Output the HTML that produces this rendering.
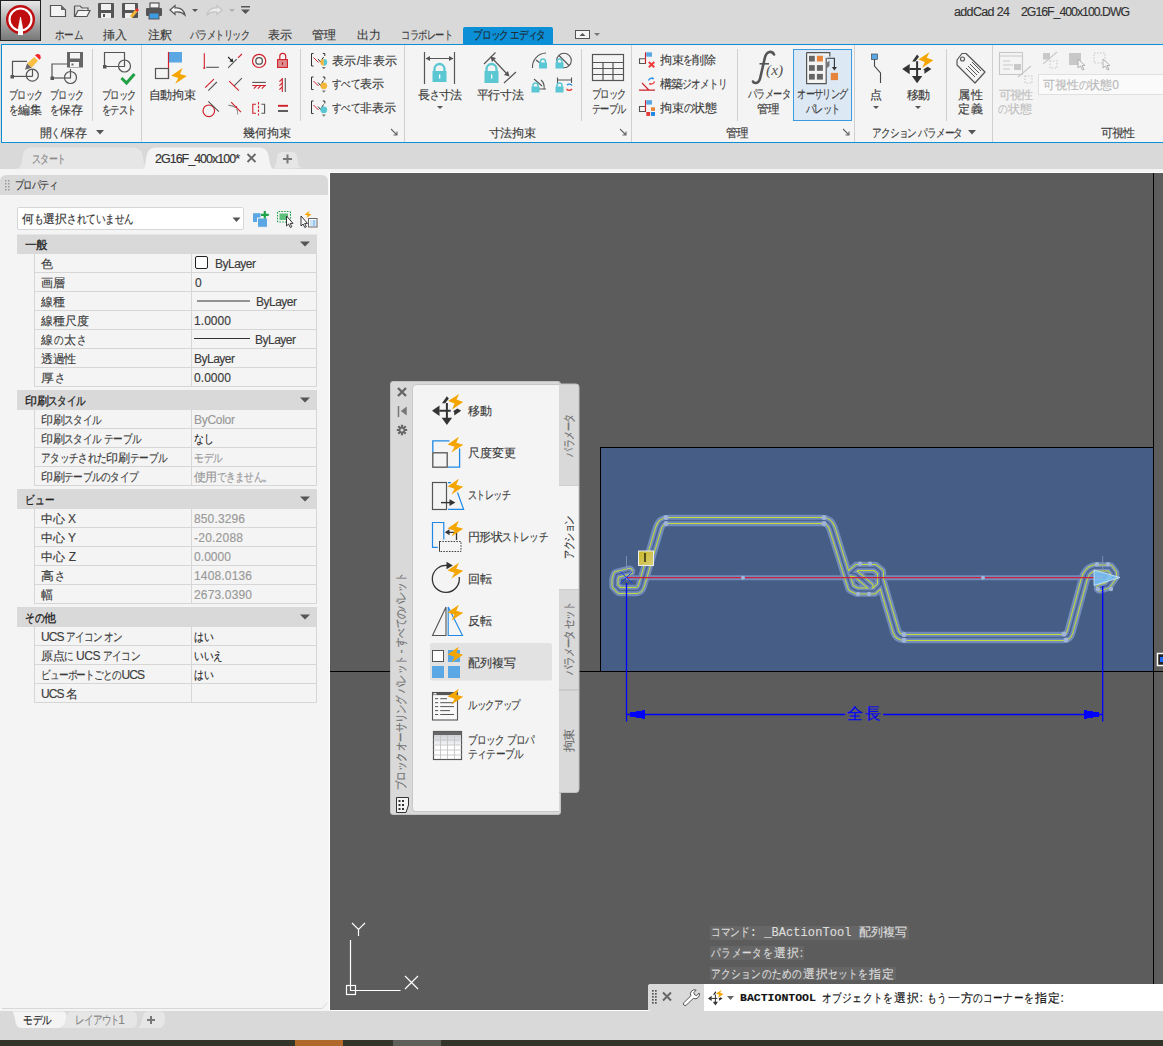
<!DOCTYPE html><html><head><meta charset="utf-8">
<style>
*{box-sizing:border-box;margin:0;padding:0}
html,body{width:1163px;height:1046px;overflow:hidden;background:#d9d9d9;font-family:"Liberation Sans",sans-serif;font-size:12px;color:#3c3c3c}
.a{position:absolute}
.t{position:absolute;white-space:nowrap;line-height:14px;height:14px;transform-origin:0 50%;-webkit-text-stroke:0.15px currentColor}
.c{position:absolute;white-space:nowrap;line-height:14px;height:14px;text-align:center;transform-origin:50% 50%;-webkit-text-stroke:0.15px currentColor}
.s8{transform:scaleX(.8)}
.s85{transform:scaleX(.85)}
.s75{transform:scaleX(.75)}
.s9{transform:scaleX(.9)}
svg.ov{position:absolute;left:0;top:0;overflow:visible}
</style></head><body>
<!-- ============ TOP BAR ============ -->
<div class="a" style="left:0;top:0;width:1163px;height:43px;background:#d9d9d9"></div>
<!-- logo -->
<div class="a" style="left:0;top:0;width:41px;height:41px;background:linear-gradient(#e8e8e8 0%,#b4b4b4 45%,#777 100%);border:1px solid #222"></div>
<svg class="ov" width="1163" height="43">
  <circle cx="20.5" cy="19.5" r="14.5" fill="#c00d10"></circle>
  <circle cx="20.5" cy="19.5" r="11" fill="none" stroke="#fff" stroke-width="2.2"></circle>
  <path d="M20.5 17 L18 30 L23 30 Z M20.5 17 L20.5 25" fill="#fff" stroke="#fff" stroke-width="0.6"></path>
  <rect x="18" y="29" width="5" height="6" fill="#fff"></rect>
  <!-- quick access -->
  <path d="M50.5 5.5 H61 L65.5 10 V16.5 H50.5 Z" fill="#f4f4f4" stroke="#555" stroke-width="1.2"></path>
  <path d="M61 5.5 L65.5 10 H61 Z" fill="#666"></path>
  <path d="M74.5 6 H80 L82 8 H88 V11 M74.5 6 V16.5 H87 L90 10.5 H78 L75 16.5" fill="#f4f4f4" stroke="#555" stroke-width="1.2"></path>
  <rect x="98" y="3" width="16" height="15" rx="1" fill="#555"></rect>
  <rect x="101" y="4" width="10" height="6" fill="#f0f0f0"></rect>
  <rect x="101" y="13" width="10" height="5" fill="#f0f0f0"></rect><rect x="103" y="14" width="2" height="3" fill="#555"></rect>
  <rect x="122" y="3" width="16" height="15" rx="1" fill="#555"></rect>
  <rect x="125" y="4" width="10" height="6" fill="#f0f0f0"></rect>
  <rect x="125" y="13" width="7" height="5" fill="#f0f0f0"></rect>
  <path d="M131 17 L137 10" stroke="#f5b73b" stroke-width="3"></path><path d="M136 11 L138 9" stroke="#e33" stroke-width="3"></path>
  <rect x="150" y="3" width="9" height="5" fill="#f4f4f4" stroke="#555" stroke-width="1.2"></rect>
  <rect x="146" y="8" width="16" height="8" rx="1" fill="#555"></rect>
  <rect x="149" y="13" width="10" height="6" fill="#3d9be0" stroke="#555" stroke-width="1"></rect>
  <path d="M170 10 L175 5.5 V8 Q183 7 185 15 Q181 11 175 12 V14.5 Z" fill="#f4f4f4" stroke="#555" stroke-width="1.2"></path>
  <path d="M192 9 H198 L195 12 Z" fill="#555"></path>
  <path d="M222 10 L217 5.5 V8 Q209 7 207 15 Q211 11 217 12 V14.5 Z" fill="#ececec" stroke="#c4c4c4" stroke-width="1.2"></path>
  <path d="M229 9 H235 L232 12 Z" fill="#b0b0b0"></path>
  <rect x="241" y="6" width="9" height="1.5" fill="#555"></rect><path d="M241 9.5 H250 L245.5 14 Z" fill="#555"></path>
</svg>
<div class="t" style="left: 954px; top: 5px; font-size: 12.5px; color: rgb(51, 51, 51); letter-spacing: -0.65px;">addCad 24</div>
<div class="t" style="left: 1021px; top: 5px; font-size: 12.5px; color: rgb(51, 51, 51); transform: scaleX(0.981); letter-spacing: -1px;">2G16F_400x100.DWG</div>
<!-- ribbon tabs -->
<div class="a" style="left:463px;top:27px;width:90px;height:17px;background:#0b8fd6;border-radius:2px 2px 0 0"></div>
<div class="t" style="left: 55px; top: 27.5px; font-size: 12px; letter-spacing: -0.4px;"><span style="display: inline-block; transform-origin: 0px 50%; transform: scaleX(0.8); margin-right: -7.2px;">ホーム</span></div>
<div class="t" style="left: 103px; top: 27.5px; font-size: 12px; letter-spacing: 0px;">挿入</div>
<div class="t" style="left: 148px; top: 27.5px; font-size: 12px; letter-spacing: 0px;">注釈</div>
<div class="t" style="left: 190px; top: 27.5px; font-size: 12px; transform: scaleX(0.958); letter-spacing: -1px;"><span style="display: inline-block; transform-origin: 0px 50%; transform: scaleX(0.8); margin-right: -16.8px;">パラメトリック</span></div>
<div class="t" style="left: 268px; top: 27.5px; font-size: 12px; letter-spacing: 0px;">表示</div>
<div class="t" style="left: 312px; top: 27.5px; font-size: 12px; letter-spacing: 0px;">管理</div>
<div class="t" style="left: 357px; top: 27.5px; font-size: 12px; letter-spacing: 0px;">出力</div>
<div class="t" style="left: 401px; top: 27.5px; font-size: 12px; transform: scaleX(0.967); letter-spacing: -1px;"><span style="display: inline-block; transform-origin: 0px 50%; transform: scaleX(0.8); margin-right: -14.4px;">コラボレート</span></div>
<div class="t" style="left: 473px; top: 27.5px; font-size: 12px; color: rgb(31, 42, 51); letter-spacing: -1px;"><span style="display: inline-block; transform-origin: 0px 50%; transform: scaleX(0.8); margin-right: -9.6px;">ブロック</span> <span style="display: inline-block; transform-origin: 0px 50%; transform: scaleX(0.8); margin-right: -9.6px;">エディタ</span></div>
<svg class="ov" width="1163" height="43">
  <rect x="575.5" y="30.5" width="14" height="8" fill="#f4f4f4" stroke="#555" stroke-width="1"></rect>
  <path d="M579.5 36 H585.5 L582.5 33 Z" fill="#555"></path>
  <path d="M594 33 H600 L597 36 Z" fill="#777"></path>
</svg>

<!-- ============ RIBBON ============ -->
<div class="a" id="ribbon" style="left:1px;top:44px;width:1162px;height:99px;background:#f4f4f4;border-top:1px solid #0b8fd6;border-bottom:1px solid #0b8fd6;border-left:1px solid #0b8fd6"></div>
<svg class="ov" width="1163" height="145">
  <defs><path id="bolt" d="M11.4 0 L0 7.8 L7.1 9.9 L4 15.8 L15.7 8 L8.8 6 Z" fill="#f5a500"></path></defs>
  <!-- separators -->
  <g stroke="#d0d0d0" stroke-width="1">
    <path d="M92.5 49 V121"></path><path d="M141.5 45 V142"></path><path d="M300.5 49 V121"></path><path d="M404.5 45 V142"></path>
    <path d="M581.5 49 V121"></path><path d="M631.5 45 V142"></path><path d="M737.5 49 V121"></path><path d="M854.5 45 V142"></path>
    <path d="M946.5 49 V121"></path><path d="M992.5 45 V142"></path>
  </g>
  <!-- Block edit -->
  <g fill="none" stroke="#555" stroke-width="1.2">
    <path d="M12.5 76.4 V61.3 H27"></path><path d="M12.5 76.4 H32.5"></path><path d="M32.5 69.5 V76.4"></path>
    <circle cx="32.3" cy="75.2" r="6"></circle>
  </g>
  <rect x="10.5" y="75" width="3.5" height="3.5" fill="#555"></rect>
  <path d="M27.1 63.5 L34.2 57 L38 60.7 L31.6 67.8 Z" fill="#f9bf45"></path><path d="M27.1 63.5 L31.6 67.8 L25 69.8 Z" fill="#666"></path>
  <path d="M35 55.3 L39.6 59.8 Q41.6 57.5 40.3 55.2 Q38 53 35 55.3 Z" fill="#f02828"></path>
  <!-- Block save -->
  <g fill="none" stroke="#555" stroke-width="1.2">
    <path d="M52 78 V64 H67"></path><path d="M52 78 H71"></path><path d="M70.5 69 V78"></path>
    <circle cx="70.5" cy="77.5" r="6"></circle>
  </g>
  <rect x="50.5" y="76.5" width="3.5" height="3.5" fill="#555"></rect>
  <rect x="67" y="52" width="16" height="15.5" fill="#666"></rect>
  <rect x="70" y="53" width="10" height="5.5" fill="#f4f4f4"></rect><rect x="70" y="62" width="9" height="5" fill="#f4f4f4"></rect><rect x="71.5" y="63.5" width="2" height="2" fill="#666"></rect>
  <!-- Block test -->
  <g fill="none" stroke="#555" stroke-width="1.2">
    <path d="M104.5 66.5 V52.5 H124.5 V66.5 H104.5"></path>
    <circle cx="124.5" cy="66" r="6"></circle>
  </g>
  <rect x="103" y="65" width="3.5" height="3.5" fill="#555"></rect>
  <path d="M121.5 78 L126.5 83 L134.5 74" fill="none" stroke="#22a045" stroke-width="3"></path>
  <!-- auto constrain -->
  <rect x="169" y="52" width="13" height="10.5" fill="#5aa7e4"></rect>
  <path d="M168.5 52 V78.5" stroke="#d0202a" stroke-width="1.2"></path>
  <rect x="155.5" y="68.5" width="13" height="10" fill="none" stroke="#555" stroke-width="1.2"></rect>
  <use href="#bolt" transform="translate(171.2,68)"></use>
  <!-- geometric grid -->
  <g stroke-width="1.1" fill="none">
    <path d="M204.3 53.2 V67" stroke="#d0202a"></path><path d="M206.2 67.3 H218.9" stroke="#555"></path>
    <path d="M228.1 67.8 L236.7 59.2" stroke="#555"></path><path d="M238 57.9 L241.9 54" stroke="#d0202a"></path><path d="M228.1 57 L232.2 61.1" stroke="#222"></path>
    <circle cx="259.1" cy="60.9" r="6.6" stroke="#d0202a" stroke-width="1.2"></circle><circle cx="259.1" cy="60.9" r="3.3" stroke="#555" stroke-width="1.3"></circle>
    <path d="M205.1 87.7 L213.9 79.1" stroke="#d0202a"></path><path d="M208.3 90.6 L216.9 82" stroke="#555"></path>
    <path d="M229.1 81.1 L238.9 90.6" stroke="#d0202a"></path><path d="M234.1 85.8 L241.9 78.1" stroke="#555"></path>
    <path d="M252.2 82.4 H265.9" stroke="#555"></path><path d="M252.2 85.5 H265.9 M253.8 88.6 L256.6 85.8 M257.8 88.6 L260.6 85.8 M261.8 88.6 L264.6 85.8" stroke="#d0202a"></path>
    <path d="M285.3 78.1 V91.9" stroke="#555"></path><path d="M282.3 78.1 V91.9 M279.4 81.6 L282.2 78.8 M279.4 85.6 L282.2 82.8 M279.4 89.6 L282.2 86.8" stroke="#d0202a"></path>
    <circle cx="208.8" cy="110.8" r="5.8" stroke="#d0202a" stroke-width="1.2"></circle><path d="M208.3 101.3 L218.9 111.6" stroke="#555"></path>
    <path d="M231.1 102.2 L241 112.1" stroke="#d0202a"></path><path d="M228.4 105.4 Q232 105.2 235 107.3 M236.6 108.8 Q238.2 111.5 237.6 114.4" stroke="#888"></path>
    <path d="M256 104.3 H252.8 V113.3 H256" stroke="#d0202a"></path><path d="M261.4 104.3 H264.6 V113.3 H261.4" stroke="#555"></path><path d="M258.5 102 V115.5" stroke="#d0202a" stroke-dasharray="2.5 1.3"></path>
    <path d="M278 105.8 H288" stroke="#d0202a" stroke-width="1.9"></path><path d="M278 111 H288" stroke="#555" stroke-width="1.9"></path>
  </g>
  <circle cx="204.3" cy="68" r="1.1" fill="#d0202a"></circle><circle cx="236.1" cy="106.9" r="1" fill="#d0202a"></circle>
  <path d="M233.2 62.1 L229.4 61.5 L232.6 58.3 Z" fill="#222"></path>
  <path d="M279.8 59.2 V56.3 A2.95 2.95 0 0 1 285.7 56.3 V59.2" fill="none" stroke="#d0202a" stroke-width="1.2"></path>
  <rect x="277.6" y="59.6" width="9.8" height="7.8" fill="#dd8d91" stroke="#d0202a" stroke-width="1.1"></rect>
  <path d="M282.5 62.2 V64.8" stroke="#b0101a" stroke-width="1.1"></path>
  <!-- show/hide -->
  <path d="M313.5 53.5 H311.5 V66 H313.5 M322.8 53.5 H324.8 V56" fill="none" stroke="#333" stroke-width="1"></path>
  <path d="M313.5 57.5 L318.5 62.5" stroke="#d0202a" stroke-width="1"></path>
  <path d="M318 59 L320.5 62 L323.5 57" fill="none" stroke="#333" stroke-width="1"></path>
  <path d="M323.8 58.9 A3.4 3.4 0 0 0 323.8 65.7 Z" fill="#f5b73b"></path><path d="M323.8 58.9 A3.4 3.4 0 0 1 323.8 65.7 Z" fill="#5bc7d3"></path>
  <path d="M321.8 66.89999999999999 H325.8 L323.8 69.3 Z" fill="#777"></path>
  <path d="M313.5 77.0 H311.5 V89.5 H313.5 M322.8 77.0 H324.8 V79.5" fill="none" stroke="#333" stroke-width="1"></path>
  <path d="M313.5 81.0 L318.5 86.0" stroke="#d0202a" stroke-width="1"></path>
  <path d="M318 82.5 L320.5 85.5 L323.5 80.5" fill="none" stroke="#333" stroke-width="1"></path>
  <circle cx="323.8" cy="85.8" r="3.4" fill="#f5b73b"></circle>
  <path d="M321.8 90.39999999999999 H325.8 L323.8 92.8 Z" fill="#777"></path>
  <path d="M313.5 101.0 H311.5 V113.5 H313.5 M322.8 101.0 H324.8 V103.5" fill="none" stroke="#333" stroke-width="1"></path>
  <path d="M313.5 105.0 L318.5 110.0" stroke="#d0202a" stroke-width="1"></path>
  <path d="M318 106.5 L320.5 109.5 L323.5 104.5" fill="none" stroke="#333" stroke-width="1"></path>
  <circle cx="323.8" cy="109.8" r="3.4" fill="#5bc7d3"></circle>
  <path d="M321.8 114.39999999999999 H325.8 L323.8 116.8 Z" fill="#777"></path>
<path d="M391 129 L397 135 M393.5 135 H397 V131.5" fill="none" stroke="#666" stroke-width="1.1"></path>
  <!-- linear dim -->
  <g stroke="#555" stroke-width="1.2" fill="none">
    <path d="M424.5 52 V84 M454.5 52 V84 M426 58.5 H453"></path>
  </g>
  <path d="M425.5 58.5 L430 56 V61 Z M453.5 58.5 L449 56 V61 Z" fill="#555"></path>
  <path d="M434.5 72 V69 A5 5 0 0 1 444.5 69 V72" fill="none" stroke="#5bc7d3" stroke-width="2.3"></path>
  <rect x="432.5" y="71" width="14" height="11" fill="#5bc7d3"></rect><rect x="439" y="74.5" width="1.3" height="4" fill="#fff"></rect>
  <path d="M437 106 H443 L440 109 Z" fill="#555"></path>
  <!-- aligned dim -->
  <g stroke="#555" stroke-width="1.2" fill="none">
    <path d="M484 64 L495.5 52.5 M504 83 L516 72 M492 58 L508 75"></path>
  </g>
  <path d="M490.5 56.5 L492 62 L496 58 Z M509.5 76.5 L504 75 L508 71 Z" fill="#555"></path>
  <path d="M486.5 72 V69 A5 5 0 0 1 496.5 69 V72" fill="none" stroke="#5bc7d3" stroke-width="2.3"></path>
  <rect x="484.5" y="71" width="14" height="12" fill="#5bc7d3"></rect><rect x="491" y="74.5" width="1.3" height="4" fill="#fff"></rect>
  <!-- small dim icons -->
  <g stroke="#555" stroke-width="1.1" fill="none">
    <path d="M532.5 68 A14 14 0 0 1 546 53"></path><path d="M536 60 L540 63"></path>
    <circle cx="564" cy="60.5" r="7.3"></circle><path d="M559 55.5 L569 65.5"></path>
    <path d="M532 89 H546 M534 79 L542 86 M541 80 A10 10 0 0 1 544 89"></path>
    <path d="M557.5 77.5 V83 M571.5 77.5 V83 M558 80 H571"></path>
  </g>
  <g fill="#5bc7d3">
    <path d="M540.5 63 V61.5 A2.5 2.5 0 0 1 545.5 61.5 V63" fill="none" stroke="#5bc7d3" stroke-width="1.5"></path><rect x="539" y="62.5" width="8" height="6"></rect>
    <path d="M557 63 V61.5 A2.5 2.5 0 0 1 562 61.5 V63" fill="none" stroke="#5bc7d3" stroke-width="1.5"></path><rect x="555.5" y="62.5" width="8" height="6"></rect>
    <path d="M533 87 V85.5 A2.5 2.5 0 0 1 538 85.5 V87" fill="none" stroke="#5bc7d3" stroke-width="1.5"></path><rect x="531.5" y="86.5" width="8" height="6"></rect>
    <path d="M557 87 V85.5 A2.5 2.5 0 0 1 562 85.5 V87" fill="none" stroke="#5bc7d3" stroke-width="1.5"></path><rect x="555.5" y="86.5" width="8" height="6"></rect>
  </g>
  <path d="M567 85 A3.5 3.5 0 0 1 572 85.5" fill="none" stroke="#1e88e5" stroke-width="1.3"></path><path d="M572 89 A3.5 3.5 0 0 1 566.5 89" fill="none" stroke="#e53935" stroke-width="1.3"></path>
  <!-- block table -->
  <g fill="none" stroke="#555" stroke-width="1.2">
    <rect x="592.5" y="54.5" width="31" height="26"></rect><path d="M592.5 62.5 H623.5 M592.5 68.5 H623.5 M592.5 74.5 H623.5 M603 62.5 V80.5 M613 62.5 V80.5"></path>
  </g>
  <path d="M620 129 L626 135 M622.5 135 H626 V131.5" fill="none" stroke="#666" stroke-width="1.1"></path>
  <!-- manage small -->
  <path d="M645.5 58.7 V63.5 H639.5 V58.7 H645.5" fill="none" stroke="#555" stroke-width="1.1"></path>
  <path d="M645.5 52.3 V63.5" stroke="#d0202a" stroke-width="1.1"></path><rect x="646.2" y="52.3" width="5.8" height="4.4" fill="#5aa7e4"></rect>
  <path d="M648.8 62 L654.3 67.3 M654.3 62 L648.8 67.3" stroke="#f03a3a" stroke-width="1.9"></path>
  <path d="M639 90.1 H655 M642 83 L648.8 90" fill="none" stroke="#d0202a" stroke-width="1.1"></path>
  <path d="M648.5 80.5 A3.6 3.6 0 0 1 653.5 78.5" fill="none" stroke="#1e88e5" stroke-width="1.2"></path><path d="M652.8 77 L654 79 L651.8 79.4 Z" fill="#1e88e5"></path>
  <path d="M654.5 81.5 A3.6 3.6 0 0 1 649.5 83.8" fill="none" stroke="#e53935" stroke-width="1.2"></path><path d="M650.2 85.3 L649 83.3 L651.2 83 Z" fill="#e53935"></path>
  <path d="M645.5 106.5 V111.5 H639.5 V106.5 H645.5" fill="none" stroke="#555" stroke-width="1.1"></path>
  <path d="M645.5 100.2 V111.5" stroke="#d0202a" stroke-width="1.1"></path><rect x="646.2" y="100.2" width="5.8" height="4.4" fill="#5aa7e4"></rect>
  <rect x="651" y="107.3" width="4" height="3.6" fill="#e5843a"></rect><rect x="646.3" y="112" width="3.8" height="3.9" fill="#e53935"></rect><rect x="651" y="112" width="4" height="3.9" fill="#1e88e5"></rect>
  <!-- f(x) -->
  <path d="M774 54.5 Q772.5 51.5 769.5 52 Q766 52.8 764.8 58 L760.2 78 Q759 83 755.5 83 Q753.5 83 753 81.5" fill="none" stroke="#555" stroke-width="2.6" stroke-linecap="round"></path>
  <path d="M759.5 63.8 H769" stroke="#555" stroke-width="1.6"></path>
  <text x="766" y="74.5" font-family="Liberation Serif" font-style="italic" font-size="15.5" fill="#555">(x)</text>
  <path d="M843 129 L849 135 M845.5 135 H849 V131.5" fill="none" stroke="#666" stroke-width="1.1"></path>
</svg>
<!-- authoring palette selected button -->
<div class="a" style="left:793px;top:49px;width:59px;height:72px;background:#dce8f4;border:1px solid #3c9be0"></div>
<svg class="ov" width="1163" height="145">
  <path d="M806.6 52.6 H829.8 V56.5 M826.2 58 V83.6 H806.6 V52.6" fill="#f4f4f4" stroke="#555" stroke-width="1.2"></path>
  <g fill="#666"><rect x="809" y="55.8" width="5.8" height="5.7"></rect><rect x="809" y="65.1" width="5.8" height="5.7"></rect><rect x="816.9" y="65.1" width="6" height="5.7"></rect><rect x="809" y="73.9" width="5.8" height="5.7"></rect><rect x="816.9" y="73.9" width="6" height="5.7"></rect></g>
  <rect x="816.9" y="55.8" width="6" height="5.7" fill="#e5843a"></rect>
  <path d="M826.5 63 L829.5 60.5 V66 L826.5 68.5 Z" fill="#777"></path>
  <path d="M827.2 58.2 H834.4 V68" fill="none" stroke="#333" stroke-width="1.1"></path><path d="M831.8 67 H837 L834.4 70.5 Z" fill="#333"></path>
  <rect x="830.8" y="72.9" width="7.2" height="7.2" fill="#e5843a"></rect>
  <!-- point -->
  <rect x="871.5" y="54" width="6" height="5.5" fill="#5aa7e4" stroke="#333" stroke-width="0.6"></rect>
  <path d="M874.5 59.5 V66 L880.5 73 V83" fill="none" stroke="#444" stroke-width="1.1"></path>
  <path d="M873 106 H879 L876 109 Z" fill="#555"></path>
  <!-- move -->
  <defs><g id="mvicon">
    <path d="M917.1 61.2 V76.5 M909.5 69.1 H920.9" stroke="#333" stroke-width="2"></path>
    <path d="M902.2 69.1 L909.7 63.9 V74.3 Z" fill="#333"></path>
    <path d="M917.1 83.2 L911.9 76 H922.3 Z" fill="#333"></path>
    <path d="M912.2 61.6 L917.1 54.6 L919 56.8 L915.4 61.6 Z" fill="#333"></path>
    <path d="M923.2 69.5 L927.7 66.8 L931.4 69.1 L924.4 73.8 V70.3 Z" fill="#333"></path>
    <path d="M929.4 52.3 L918.4 59.4 L924.8 61.9 L922.3 67.7 L933.3 60.2 L926.7 57.7 Z" fill="#f5a500"></path>
  </g></defs>
  <use href="#mvicon"></use>
  <path d="M915 106 H921 L918 109 Z" fill="#555"></path>
  <!-- attribute def tag -->
  <path d="M957 60 L962 53.5 L966 53.5 L985 72 L975 83 L957 65 Z" fill="#f4f4f4" stroke="#555" stroke-width="1.2" stroke-linejoin="round"></path>
  <circle cx="962.5" cy="59" r="2" fill="none" stroke="#555" stroke-width="1.1"></circle>
  <path d="M968 66 L977 75 M970 64 L979 73 M972 62 L981 71 M966 68 L975 77" stroke="#555" stroke-width="1"></path>
  <!-- visibility disabled -->
  <g stroke="#c8c8c8" stroke-width="1.1" fill="none">
    <rect x="999.5" y="52.5" width="23" height="22"></rect><path d="M999.5 56 H1022.5 M1003 61 H1010 M1003 65 H1013 M1003 69 H1010 M1018 77 L1031 66"></path>
    <path d="M1025 76 H1032 V83 H1025 Z" stroke-dasharray="1.5 1.5"></path>
    <path d="M1043 64 L1057 52"></path><path d="M1050 61 H1057 V68 H1050 Z" stroke-dasharray="1.5 1.5"></path>
    <path d="M1094 53 H1105 V63 H1094 Z" stroke-dasharray="1.5 1.5"></path>
  </g>
  <rect x="1014" y="64" width="7" height="6" fill="#c8c8c8"></rect>
  <rect x="1043" y="53" width="7" height="6.5" fill="#c8c8c8"></rect>
  <rect x="1069" y="53" width="12" height="12" fill="#c8c8c8"></rect>
  <path d="M1078 59 V68 L1080.5 66 L1082.5 70 L1084 69.5 L1082 65.5 H1085 Z" fill="#f4f4f4" stroke="#aaa" stroke-width="0.9"></path>
  <path d="M1103 59 V68 L1105.5 66 L1107.5 70 L1109 69.5 L1107 65.5 H1110 Z" fill="#f4f4f4" stroke="#aaa" stroke-width="0.9"></path>
</svg>
<div class="a" style="left:1038px;top:74px;width:130px;height:21px;background:#fafafa;border:1px solid #e0e0e0"></div>
<div class="t" style="left: 1043px; top: 77.5px; color: rgb(185, 185, 185); letter-spacing: -0.05px;">可視性<span style="display: inline-block; transform-origin: 0px 50%; transform: scaleX(0.8); margin-right: -2.4px;">の</span>状態0</div>
<!-- ribbon labels -->
<div class="c" style="left: 0px; width: 51px; top: 87.5px; transform: scaleX(0.939); letter-spacing: -1px;"><span style="display: inline-block; transform-origin: 0px 50%; transform: scaleX(0.8); margin-right: -9.6px;">ブロック</span></div>
<div class="c" style="left: 0px; width: 51px; top: 102.5px; letter-spacing: -0.3px;"><span style="display: inline-block; transform-origin: 0px 50%; transform: scaleX(0.8); margin-right: -2.4px;">を</span>編集</div>
<div class="c" style="left: 41px; width: 51px; top: 87.5px; transform: scaleX(0.939); letter-spacing: -1px;"><span style="display: inline-block; transform-origin: 0px 50%; transform: scaleX(0.8); margin-right: -9.6px;">ブロック</span></div>
<div class="c" style="left: 41px; width: 51px; top: 102.5px; letter-spacing: -0.3px;"><span style="display: inline-block; transform-origin: 0px 50%; transform: scaleX(0.8); margin-right: -2.4px;">を</span>保存</div>
<div class="c" style="left: 93px; width: 51px; top: 87.5px; transform: scaleX(0.967); letter-spacing: -1px;"><span style="display: inline-block; transform-origin: 0px 50%; transform: scaleX(0.8); margin-right: -9.6px;">ブロック</span></div>
<div class="c" style="left: 93px; width: 51px; top: 102.5px; transform: scaleX(0.967); letter-spacing: -1px;"><span style="display: inline-block; transform-origin: 0px 50%; transform: scaleX(0.8); margin-right: -9.6px;">をテスト</span></div>
<div class="c" style="left: 33px; width: 60px; top: 125.5px; letter-spacing: -0.49px;">開<span style="display: inline-block; transform-origin: 0px 50%; transform: scaleX(0.8); margin-right: -2.4px;">く</span>/保存</div>
<svg class="ov" width="1163" height="145"><path d="M96 130 H104 L100 134.5 Z" fill="#555"></path><path d="M968 130 H976 L972 134.5 Z" fill="#555"></path></svg>
<div class="c" style="left: 142px; width: 60px; top: 88px; letter-spacing: -0.33px;">自動拘束</div>
<div class="c" style="left: 237px; width: 60px; top: 126px; letter-spacing: 0px;">幾何拘束</div>
<div class="t" style="left: 332px; top: 53.7px; letter-spacing: 0.33px;">表示/非表示</div>
<div class="t" style="left: 332px; top: 77.2px; letter-spacing: -0.2px;"><span style="display: inline-block; transform-origin: 0px 50%; transform: scaleX(0.8); margin-right: -7.2px;">すべて</span>表示</div>
<div class="t" style="left: 332px; top: 101.2px; letter-spacing: -0.16px;"><span style="display: inline-block; transform-origin: 0px 50%; transform: scaleX(0.8); margin-right: -7.2px;">すべて</span>非表示</div>
<div class="c" style="left: 410px; width: 60px; top: 87.5px; letter-spacing: -0.54px;">長<span style="display: inline-block; transform-origin: 0px 50%; transform: scaleX(0.8); margin-right: -2.4px;">さ</span>寸法</div>
<div class="c" style="left: 470px; width: 60px; top: 88px; letter-spacing: -0.33px;">平行寸法</div>
<div class="c" style="left: 578px; width: 60px; top: 87px; transform: scaleX(0.967); letter-spacing: -1px;"><span style="display: inline-block; transform-origin: 0px 50%; transform: scaleX(0.8); margin-right: -9.6px;">ブロック</span></div>
<div class="c" style="left: 578px; width: 60px; top: 102px; transform: scaleX(0.967); letter-spacing: -1px;"><span style="display: inline-block; transform-origin: 0px 50%; transform: scaleX(0.8); margin-right: -9.6px;">テーブル</span></div>
<div class="c" style="left: 482px; width: 60px; top: 126px; letter-spacing: -0.33px;">寸法拘束</div>
<div class="t" style="left: 660px; top: 52.5px; letter-spacing: -0.4px;">拘束<span style="display: inline-block; transform-origin: 0px 50%; transform: scaleX(0.8); margin-right: -2.4px;">を</span>削除</div>
<div class="t" style="left: 660px; top: 76.5px; letter-spacing: -0.83px;">構築<span style="display: inline-block; transform-origin: 0px 50%; transform: scaleX(0.8); margin-right: -12px;">ジオメトリ</span></div>
<div class="t" style="left: 660px; top: 100.5px; letter-spacing: -0.15px;">拘束<span style="display: inline-block; transform-origin: 0px 50%; transform: scaleX(0.8); margin-right: -2.4px;">の</span>状態</div>
<div class="c" style="left: 738px; width: 60px; top: 87px; transform: scaleX(0.956); letter-spacing: -1px;"><span style="display: inline-block; transform-origin: 0px 50%; transform: scaleX(0.8); margin-right: -12px;">パラメータ</span></div>
<div class="c" style="left: 738px; width: 60px; top: 102px; transform: scaleX(0.957); letter-spacing: -1px;">管理</div>
<div class="c" style="left: 792px; width: 60px; top: 87px; transform: scaleX(0.948); letter-spacing: -1px;"><span style="display: inline-block; transform-origin: 0px 50%; transform: scaleX(0.8); margin-right: -14.4px;">オーサリング</span></div>
<div class="c" style="left: 792px; width: 60px; top: 102px; transform: scaleX(0.967); letter-spacing: -1px;"><span style="display: inline-block; transform-origin: 0px 50%; transform: scaleX(0.8); margin-right: -9.6px;">パレット</span></div>
<div class="c" style="left: 707px; width: 60px; top: 126px; transform: scaleX(0.957); letter-spacing: -1px;">管理</div>
<div class="c" style="left: 846px; width: 60px; top: 88px; letter-spacing: 0px;">点</div>
<div class="c" style="left: 888px; width: 60px; top: 88px; letter-spacing: -1px;">移動</div>
<div class="c" style="left: 941px; width: 60px; top: 88px; letter-spacing: 1px;">属性</div>
<div class="c" style="left: 941px; width: 60px; top: 102px; letter-spacing: 1px;">定義</div>
<div class="c" style="left: 985px; width: 60px; top: 88px; color: rgb(192, 192, 192); letter-spacing: -1px;">可視性</div>
<div class="c" style="left: 985px; width: 60px; top: 102px; color: rgb(192, 192, 192); letter-spacing: 0.2px;"><span style="display: inline-block; transform-origin: 0px 50%; transform: scaleX(0.8); margin-right: -2.4px;">の</span>状態</div>
<div class="c" style="left: 862px; width: 110px; top: 126px; letter-spacing: -0.93px;"><span style="display: inline-block; transform-origin: 0px 50%; transform: scaleX(0.8); margin-right: -12px;">アクション</span> <span style="display: inline-block; transform-origin: 0px 50%; transform: scaleX(0.8); margin-right: -12px;">パラメータ</span></div>
<div class="c" style="left: 1087px; width: 60px; top: 126px; letter-spacing: -1px;">可視性</div>


<!-- ============ DOC TABS ============ -->
<div class="a" style="left:0;top:143px;width:1163px;height:29px;background:#d9d9d9"></div>
<svg class="ov" width="1163" height="180">
  <path d="M14 169 C20 169 21 166 22 160 C23 151 25 147.5 33 147.5 H132 C140 147.5 142 151 143 158 C144 165 146 169 152 169 Z" fill="#e6e6e6"></path>
  <path d="M138 172 C144 172 145 168 146 160 C147 151 149 147.5 157 147.5 H258 C266 147.5 268 151 269 158 C270 166 272 172 280 172 Z" fill="#f4f4f4"></path>
  <path d="M270 169 C275 169 276 166 276.5 160 C277 154 278 152 284 152 H292 C296 152 297 155 297.5 159 C298 165 299 167 302 168 Z" fill="#e6e6e6"></path>
  <path d="M247.5 154 L255.5 162 M255.5 154 L247.5 162" stroke="#666" stroke-width="1.8"></path>
  <path d="M283 159 H292 M287.5 154.5 V163.5" stroke="#777" stroke-width="2"></path>
</svg>
<div class="t" style="left: 32px; top: 152px; color: rgb(138, 138, 138); transform: scaleX(0.939); letter-spacing: -1px;"><span style="display: inline-block; transform-origin: 0px 50%; transform: scaleX(0.8); margin-right: -9.6px;">スタート</span></div>
<div class="t" style="left: 155px; top: 152px; color: rgb(51, 51, 51); font-size: 12.5px; letter-spacing: -1px;">2G16F_400x100*</div>


<!-- ============ PROPERTIES ============ -->
<div class="a" id="props" style="left:0;top:169px;width:330px;height:842px;background:#f4f4f4"></div>
<div class="a" style="left:0;top:175px;width:328px;height:20px;background:#d9d9d9;border-radius:6px 6px 0 0"></div>
<div class="a" style="left:0;top:195px;width:330px;height:816px;background:#f4f4f4;border-radius:6px 0 0 0"></div>
<svg class="ov" width="330" height="1046">
  <g fill="#999"><rect x="5" y="180" width="1.5" height="1.5"></rect><rect x="8" y="180" width="1.5" height="1.5"></rect><rect x="5" y="183" width="1.5" height="1.5"></rect><rect x="8" y="183" width="1.5" height="1.5"></rect><rect x="5" y="186" width="1.5" height="1.5"></rect><rect x="8" y="186" width="1.5" height="1.5"></rect><rect x="5" y="189" width="1.5" height="1.5"></rect><rect x="8" y="189" width="1.5" height="1.5"></rect></g>
  <path d="M2 1008.5 H322 L327 1003" fill="none" stroke="#d8d8d8" stroke-width="1"></path>
</svg>
<div class="t" style="left: 15px; top: 178px; color: rgb(51, 51, 51); transform: scaleX(0.956); letter-spacing: -1px;"><span style="display: inline-block; transform-origin: 0px 50%; transform: scaleX(0.8); margin-right: -12px;">プロパティ</span></div>
<!-- dropdown -->
<div class="a" style="left:17px;top:207px;width:227px;height:23px;background:#fff;border:1px solid #d6d6d6;border-radius:2px"></div>
<div class="t" style="left: 22px; top: 212px; color: rgb(51, 51, 51); letter-spacing: -0.08px;">何<span style="display: inline-block; transform-origin: 0px 50%; transform: scaleX(0.8); margin-right: -2.4px;">も</span>選択<span style="display: inline-block; transform-origin: 0px 50%; transform: scaleX(0.8); margin-right: -16.8px;">されていません</span></div>
<svg class="ov" width="330" height="1046">
  <path d="M232.5 217.5 H240.5 L236.5 222 Z" fill="#555"></path>
  <rect x="253" y="213.2" width="7.5" height="8.8" fill="#5aa7e4"></rect>
  <rect x="257.5" y="218" width="10" height="9.3" fill="#5aa7e4" stroke="#f4f4f4" stroke-width="1"></rect>
  <path d="M264.8 211 V218.6 M261 214.8 H268.8" stroke="#1fa34a" stroke-width="2.2"></path>
  <rect x="277.5" y="211.5" width="13" height="10.5" rx="1" fill="none" stroke="#1fa34a" stroke-width="1.1" stroke-dasharray="1.6 1.2"></rect>
  <rect x="279.5" y="213.5" width="8.5" height="6.5" fill="#5dbf7a"></rect>
  <path d="M286.5 216 V226 L288.6 224 L290.3 227.5 L291.8 226.8 L290.2 223.4 H293 Z" fill="#fff" stroke="#222" stroke-width="0.9" stroke-linejoin="round"></path>
  <use href="#bolt" transform="translate(304.5,211) scale(0.45)"></use>
  <path d="M301 216 V226 L303.1 224 L304.8 227.5 L306.3 226.8 L304.7 223.4 H307.5 Z" fill="#fff" stroke="#222" stroke-width="0.9" stroke-linejoin="round"></path>
  <rect x="308.5" y="218.5" width="8.5" height="8.5" fill="#fff" stroke="#666" stroke-width="1"></rect>
  <path d="M310.5 221 H311.5 M312.5 221 H315.5 M310.5 223 H311.5 M312.5 223 H315.5 M310.5 225 H311.5 M312.5 225 H315.5" stroke="#1e88e5" stroke-width="0.9"></path>
</svg>
<!-- property grid -->
<svg class="ov" width="330" height="1046">
  <g fill="#d9d9d9"><rect x="17" y="234.5" width="300" height="19.5"></rect><rect x="17" y="390" width="300" height="20"></rect><rect x="17" y="489" width="300" height="20"></rect><rect x="17" y="607" width="300" height="20"></rect></g>
  <g fill="none" stroke="#d6d6d6" stroke-width="1">
    <path d="M34.5 253 V386.5 H316.5 V253 M191.5 253 V386.5 M34.5 272.5 H316.5 M34.5 291.5 H316.5 M34.5 310.5 H316.5 M34.5 329.5 H316.5 M34.5 348.5 H316.5 M34.5 367.5 H316.5"></path>
    <path d="M34.5 409 V485.5 H316.5 V409 M191.5 409 V485.5 M34.5 428.5 H316.5 M34.5 447.5 H316.5 M34.5 466.5 H316.5"></path>
    <path d="M34.5 508 V603.5 H316.5 V508 M191.5 508 V603.5 M34.5 527.5 H316.5 M34.5 546.5 H316.5 M34.5 565.5 H316.5 M34.5 584.5 H316.5"></path>
    <path d="M34.5 626 V702.5 H316.5 V626 M191.5 626 V702.5 M34.5 645.5 H316.5 M34.5 664.5 H316.5 M34.5 683.5 H316.5"></path>
  </g>
  <g fill="#555"><path d="M300 241.5 H310 L305 246.5 Z"></path><path d="M300 397.5 H310 L305 402.5 Z"></path><path d="M300 496.5 H310 L305 501.5 Z"></path><path d="M300 614.5 H310 L305 619.5 Z"></path></g>
  <rect x="195.5" y="256.5" width="12" height="12" rx="1.5" fill="#fff" stroke="#222" stroke-width="1"></rect>
  <path d="M197 301 H250 M194 338.5 H250" stroke="#333" stroke-width="1"></path>
</svg>
<div class="t" style="left: 25px; top: 237.7px; color: rgb(34, 34, 34); -webkit-text-stroke: 0.3px rgb(34, 34, 34); transform: scaleX(0.957); letter-spacing: -1px;">一般</div>
<div class="t" style="left: 25px; top: 393.7px; color: rgb(34, 34, 34); -webkit-text-stroke: 0.3px rgb(34, 34, 34); letter-spacing: -0.28px;">印刷<span style="display: inline-block; transform-origin: 0px 50%; transform: scaleX(0.8); margin-right: -9.6px;">スタイル</span></div>
<div class="t" style="left: 25px; top: 492.7px; color: rgb(34, 34, 34); -webkit-text-stroke: 0.3px rgb(34, 34, 34); letter-spacing: 0.6px;"><span style="display: inline-block; transform-origin: 0px 50%; transform: scaleX(0.8); margin-right: -7.2px;">ビュー</span></div>
<div class="t" style="left: 25px; top: 610.7px; color: rgb(34, 34, 34); -webkit-text-stroke: 0.3px rgb(34, 34, 34); letter-spacing: -0.1px;"><span style="display: inline-block; transform-origin: 0px 50%; transform: scaleX(0.8); margin-right: -4.8px;">その</span>他</div>

<div class="t" style="left:41px;top:256.7px">色</div>
<div class="t" style="left: 215px; top: 256.7px; letter-spacing: -0.51px;">ByLayer</div>
<div class="t" style="left: 41px; top: 275.7px; letter-spacing: 0px;">画層</div>
<div class="t" style="left:195px;top:275.7px">0</div>
<div class="t" style="left: 41px; top: 294.7px; letter-spacing: 0px;">線種</div>
<div class="t" style="left: 256px; top: 294.7px; letter-spacing: -0.51px;">ByLayer</div>
<div class="t" style="left: 41px; top: 313.7px; letter-spacing: 0px;">線種尺度</div>
<div class="t" style="left: 194px; top: 313.7px; letter-spacing: 0.06px;">1.0000</div>
<div class="t" style="left: 41px; top: 332.7px; letter-spacing: 0.93px;">線<span style="display: inline-block; transform-origin: 0px 50%; transform: scaleX(0.8); margin-right: -2.4px;">の</span>太<span style="display: inline-block; transform-origin: 0px 50%; transform: scaleX(0.8); margin-right: -2.4px;">さ</span></div>
<div class="t" style="left: 255px; top: 332.7px; letter-spacing: -0.51px;">ByLayer</div>
<div class="t" style="left: 41px; top: 351.7px; letter-spacing: -0.5px;">透過性</div>
<div class="t" style="left: 194px; top: 351.7px; letter-spacing: -0.51px;">ByLayer</div>
<div class="t" style="left: 41px; top: 370.7px; transform: scaleX(1.071); letter-spacing: 1px;">厚<span style="display: inline-block; transform-origin: 0px 50%; transform: scaleX(0.8); margin-right: -2.4px;">さ</span></div>
<div class="t" style="left: 194px; top: 370.7px; letter-spacing: 0.06px;">0.0000</div>

<div class="t" style="left: 41px; top: 412.7px; letter-spacing: -0.28px;">印刷<span style="display: inline-block; transform-origin: 0px 50%; transform: scaleX(0.8); margin-right: -9.6px;">スタイル</span></div>
<div class="t" style="left: 194px; top: 412.7px; color: rgb(153, 153, 153); letter-spacing: -0.28px;">ByColor</div>
<div class="t" style="left: 41px; top: 431.7px; letter-spacing: -0.41px;">印刷<span style="display: inline-block; transform-origin: 0px 50%; transform: scaleX(0.8); margin-right: -9.6px;">スタイル</span> <span style="display: inline-block; transform-origin: 0px 50%; transform: scaleX(0.8); margin-right: -9.6px;">テーブル</span></div>
<div class="t" style="left: 194px; top: 431.7px; color: rgb(34, 34, 34); transform: scaleX(1.016); letter-spacing: 0.8px;"><span style="display: inline-block; transform-origin: 0px 50%; transform: scaleX(0.8); margin-right: -4.8px;">なし</span></div>
<div class="t" style="left: 41px; top: 450.7px; letter-spacing: -0.3px;"><span style="display: inline-block; transform-origin: 0px 50%; transform: scaleX(0.8); margin-right: -16.8px;">アタッチされた</span>印刷<span style="display: inline-block; transform-origin: 0px 50%; transform: scaleX(0.8); margin-right: -9.6px;">テーブル</span></div>
<div class="t" style="left: 194px; top: 450.7px; color: rgb(153, 153, 153); letter-spacing: 0.1px;"><span style="display: inline-block; transform-origin: 0px 50%; transform: scaleX(0.8); margin-right: -7.2px;">モデル</span></div>
<div class="t" style="left: 41px; top: 469.7px; letter-spacing: -0.42px;">印刷<span style="display: inline-block; transform-origin: 0px 50%; transform: scaleX(0.8); margin-right: -19.2px;">テーブルのタイプ</span></div>
<div class="t" style="left: 194px; top: 469.7px; color: rgb(153, 153, 153); letter-spacing: -0.57px;">使用<span style="display: inline-block; transform-origin: 0px 50%; transform: scaleX(0.8); margin-right: -12px;">できません</span>。</div>

<div class="t" style="left: 41px; top: 511.7px; letter-spacing: -0.11px;">中心 X</div>
<div class="t" style="left: 194px; top: 511.7px; color: rgb(153, 153, 153); letter-spacing: 0.13px;">850.3296</div>
<div class="t" style="left: 41px; top: 530.7px; letter-spacing: -0.11px;">中心 Y</div>
<div class="t" style="left: 194px; top: 530.7px; color: rgb(153, 153, 153); letter-spacing: 0.23px;">-20.2088</div>
<div class="t" style="left: 41px; top: 549.7px; letter-spacing: 0.11px;">中心 Z</div>
<div class="t" style="left: 194px; top: 549.7px; color: rgb(153, 153, 153); letter-spacing: 0.06px;">0.0000</div>
<div class="t" style="left: 41px; top: 568.7px; transform: scaleX(1.071); letter-spacing: 1px;">高<span style="display: inline-block; transform-origin: 0px 50%; transform: scaleX(0.8); margin-right: -2.4px;">さ</span></div>
<div class="t" style="left: 194px; top: 568.7px; color: rgb(153, 153, 153); letter-spacing: 0.16px;">1408.0136</div>
<div class="t" style="left:41px;top:587.7px">幅</div>
<div class="t" style="left: 194px; top: 587.7px; color: rgb(153, 153, 153); letter-spacing: 0.16px;">2673.0390</div>

<div class="t" style="left: 41px; top: 629.7px; letter-spacing: -0.86px;">UCS <span style="display: inline-block; transform-origin: 0px 50%; transform: scaleX(0.8); margin-right: -9.6px;">アイコン</span> <span style="display: inline-block; transform-origin: 0px 50%; transform: scaleX(0.8); margin-right: -4.8px;">オン</span></div>
<div class="t" style="left: 194px; top: 629.7px; color: rgb(34, 34, 34); transform: scaleX(1.016); letter-spacing: 0.8px;"><span style="display: inline-block; transform-origin: 0px 50%; transform: scaleX(0.8); margin-right: -4.8px;">はい</span></div>
<div class="t" style="left: 41px; top: 648.7px; letter-spacing: -0.46px;">原点<span style="display: inline-block; transform-origin: 0px 50%; transform: scaleX(0.8); margin-right: -2.4px;">に</span> UCS <span style="display: inline-block; transform-origin: 0px 50%; transform: scaleX(0.8); margin-right: -9.6px;">アイコン</span></div>
<div class="t" style="left: 194px; top: 648.7px; color: rgb(34, 34, 34); letter-spacing: 0.1px;"><span style="display: inline-block; transform-origin: 0px 50%; transform: scaleX(0.8); margin-right: -7.2px;">いいえ</span></div>
<div class="t" style="left: 41px; top: 667.7px; letter-spacing: -0.92px;"><span style="display: inline-block; transform-origin: 0px 50%; transform: scaleX(0.8); margin-right: -21.6px;">ビューポートごとの</span> UCS</div>
<div class="t" style="left: 194px; top: 667.7px; color: rgb(34, 34, 34); transform: scaleX(1.016); letter-spacing: 0.8px;"><span style="display: inline-block; transform-origin: 0px 50%; transform: scaleX(0.8); margin-right: -4.8px;">はい</span></div>
<div class="t" style="left: 41px; top: 686.7px; letter-spacing: -0.92px;">UCS 名</div>


<!-- ============ CANVAS ============ -->
<div class="a" style="left:0;top:169px;width:1163px;height:3px;background:#f4f4f4"></div>
<div class="a" id="canvas" style="left:329px;top:172px;width:834px;height:839px;background:#fff"></div>
<div class="a" style="left:330px;top:173px;width:833px;height:837px;background:#5c5c5c"></div>
<svg class="ov" width="1163" height="1046">
  <!-- axes lines -->
  <rect x="600" y="447" width="553" height="224" fill="#465e85"></rect>
  <path d="M600.5 447.5 H1153" stroke="#000" stroke-width="1"></path>
  <path d="M600.5 447 V671" stroke="#000" stroke-width="1"></path>
  <path d="M330 671.5 H1163" stroke="#000" stroke-width="1"></path>
  <path d="M1153.5 173 V984" stroke="#000" stroke-width="1"></path>
  <rect x="1157.5" y="653.5" width="8" height="12" fill="#222" stroke="#fff" stroke-width="1.5"></rect>
  <rect x="1160" y="657" width="4" height="5" fill="#1e6bff"></rect>
  <!-- red centre line with halo -->
  <path d="M626 577.7 H1103" stroke="#718bbb" stroke-width="5"></path>
  <!-- shape -->
  <g fill="none" stroke-linejoin="round" stroke-linecap="round">
    <defs><path id="shp" d="M629.5 571.3 L616.5 574.5 L615 579.5 L615 586 L619.5 590.5 L636 590.5 Q640 590.5 641.3 586 L658.5 528 Q660.8 520.4 668 520.4 L822 520.4 Q829.5 520.4 832 528 L846.3 573.4 L851 588 L857 591 L874 591 L880.5 585 L880.5 572 L875 567.4 L857 567.4 L850.5 573 L856 574 L870 586 M880.5 579 L896 632 Q898 637.5 905 637.5 L1063 637.5 Q1068.5 637.5 1070 632 L1084 580 Q1086.5 570 1094 568 L1110 568 L1113.6 573 L1113.6 577 L1107.5 585.5 L1099.5 588"></path></defs>
    <use href="#shp" stroke="#718bbb" stroke-width="11.5"></use>
    <use href="#shp" stroke="#c4da3a" stroke-width="7"></use>
    <use href="#shp" stroke="#718bbb" stroke-width="5"></use>
    <use href="#shp" stroke="#4a6290" stroke-width="1.5"></use>
  </g>
  <path d="M626 577.7 H1103" stroke="#d0203c" stroke-width="1.3"></path>
  <g fill="#9fb4d6">
    <circle cx="666" cy="517.4" r="2.5"></circle><circle cx="666" cy="523.4" r="2.5"></circle><circle cx="824" cy="517.4" r="2.5"></circle><circle cx="824" cy="523.4" r="2.5"></circle>
    <circle cx="904" cy="634.5" r="2.5"></circle><circle cx="904" cy="640.3" r="2.5"></circle><circle cx="1064" cy="634" r="2.5"></circle><circle cx="1066" cy="640" r="2.5"></circle>
    <circle cx="743" cy="577.7" r="2"></circle><circle cx="983" cy="577.7" r="2"></circle>
    <circle cx="860" cy="563.8" r="2.2"></circle><circle cx="870" cy="563.8" r="2.2"></circle><circle cx="858" cy="594" r="2.2"></circle><circle cx="869" cy="594" r="2.2"></circle>
    <circle cx="1097" cy="564.3" r="2.2"></circle><circle cx="1108" cy="564.3" r="2.2"></circle><circle cx="1098" cy="589" r="2.2"></circle><circle cx="1111" cy="589" r="2.2"></circle>
  </g>
  <!-- grip triangle right -->
  <path d="M1094 570 V585.5 L1120 577.5 Z" fill="#7cc6f8" fill-opacity="0.85" stroke="#cfe8fb" stroke-width="1" stroke-opacity="0.8"></path>
  <!-- blue X -->
  <path d="M620.5 571.5 L632.5 583.5 M620.5 583.5 L632.5 571.5" stroke="#1f3dff" stroke-width="1"></path>
  <!-- alert marker -->
  <defs><linearGradient id="yg" x1="0" y1="0" x2="1" y2="1"><stop offset="0" stop-color="#c9b626"></stop><stop offset="1" stop-color="#d9d078"></stop></linearGradient></defs>
  <rect x="638.5" y="551" width="15" height="14.5" fill="url(#yg)" stroke="#e8eef5" stroke-width="1"></rect>
  <path d="M645 553 V562" stroke="#2a2a10" stroke-width="1.5"></path>
  <!-- faint vertical marks -->
  <path d="M626.5 556 V570 M1102.7 556 V570" stroke="#8a9bb8" stroke-width="0.8"></path>
  <!-- dimension -->
  <g stroke="#0000ff" stroke-width="1.3" fill="none">
    <path d="M626.5 583 V721.5 M1102.7 586 V721.5"></path>
    <path d="M627 714.5 H845 M883 714.5 H1102"></path>
  </g>
  <path d="M630 712 H636 V711 H642 V710 H645 V719 H642 V718 H636 V717 H630 Z" fill="#0000ff"></path>
  <path d="M1099 712 H1093 V711 H1087 V710 H1084 V719 H1087 V718 H1093 V717 H1099 Z" fill="#0000ff"></path>
  <!-- UCS -->
  <g stroke="#fff" stroke-width="1.2" fill="none">
    <path d="M350.5 940 V990.5 H400.5"></path>
    <rect x="346.5" y="985.5" width="9" height="9"></rect>
    <path d="M352 923 L358.5 929.5 L365 923 M358.5 929.5 V936"></path>
    <path d="M405 976 L418 989 M418 976 L405 989"></path>
  </g>
</svg>
<div class="t" style="left:847px;top:706px;font-size:16px;line-height:16px;height:16px;color:#0000ff;letter-spacing:2px">全長</div>
<!-- command history -->
<div class="a" style="left:710px;top:926px;width:199px;height:14px;background:#666"></div>
<div class="a" style="left:710px;top:946px;width:94px;height:14px;background:#666"></div>
<div class="a" style="left:710px;top:967px;width:186px;height:13px;background:#666"></div>
<div class="t" style="left: 711px; top: 926px; color: rgb(220, 220, 220); font-family: &quot;Liberation Mono&quot;, monospace; font-size: 12px; letter-spacing: 0.07px;"><span style="display: inline-block; transform-origin: 0px 50%; transform: scaleX(0.8); margin-right: -9.6px;">コマンド</span>: _BActionTool 配列複写</div>
<div class="t" style="left: 711px; top: 946px; color: rgb(220, 220, 220); letter-spacing: 0.88px;"><span style="display: inline-block; transform-origin: 0px 50%; transform: scaleX(0.8); margin-right: -14.4px;">パラメータを</span>選択:</div>
<div class="t" style="left: 711px; top: 966.5px; color: rgb(220, 220, 220); letter-spacing: 0.64px;"><span style="display: inline-block; transform-origin: 0px 50%; transform: scaleX(0.8); margin-right: -21.6px;">アクションのための</span>選択<span style="display: inline-block; transform-origin: 0px 50%; transform: scaleX(0.8); margin-right: -9.6px;">セットを</span>指定</div>
<!-- command line -->
<div class="a" style="left:648px;top:984px;width:520px;height:27px;background:#fff;border-radius:3px 0 0 3px"></div>
<div class="a" style="left:648px;top:984px;width:56px;height:27px;background:#d9d9d9;border-radius:3px 0 0 3px"></div>
<svg class="ov" width="1163" height="1046">
  <g fill="#555"><rect x="652" y="990" width="1.7" height="1.7"></rect><rect x="655" y="990" width="1.7" height="1.7"></rect><rect x="652" y="993" width="1.7" height="1.7"></rect><rect x="655" y="993" width="1.7" height="1.7"></rect><rect x="652" y="996" width="1.7" height="1.7"></rect><rect x="655" y="996" width="1.7" height="1.7"></rect><rect x="652" y="999" width="1.7" height="1.7"></rect><rect x="655" y="999" width="1.7" height="1.7"></rect><rect x="652" y="1002" width="1.7" height="1.7"></rect><rect x="655" y="1002" width="1.7" height="1.7"></rect></g>
  <path d="M663 992.5 L671 1000.5 M671 992.5 L663 1000.5" stroke="#666" stroke-width="2"></path>
  <path d="M683.8 1002.8 L690.8 995.8 A4.3 4.3 0 0 1 696.2 990 L693.8 992.6 L694.6 994.8 L696.8 995.6 L699.2 993 A4.3 4.3 0 0 1 693.4 998.4 L686.2 1005.2 Q684.8 1006 683.8 1005 Q683 1004 683.8 1002.8 Z" fill="#fff" stroke="#555" stroke-width="1"></path>
  <use href="#mvicon" transform="translate(256.85,963.85) scale(0.5)"></use>
  <path d="M727 996 H734 L730.5 1000 Z" fill="#666"></path>
</svg>
<div class="t" style="left:740px;top:991px;font-family:'Liberation Mono',monospace;font-weight:bold;font-size:11.5px;color:#111">BACTIONTOOL</div>
<div class="t" style="left: 822px; top: 991px; color: rgb(17, 17, 17); letter-spacing: 0.69px;"><span style="display: inline-block; transform-origin: 0px 50%; transform: scaleX(0.8); margin-right: -16.8px;">オブジェクトを</span>選択: <span style="display: inline-block; transform-origin: 0px 50%; transform: scaleX(0.8); margin-right: -4.8px;">もう</span>一方<span style="display: inline-block; transform-origin: 0px 50%; transform: scaleX(0.8); margin-right: -14.4px;">のコーナーを</span>指定:</div>
<div class="a" style="left:390px;top:381px;width:171px;height:434px;background:#d9d9d9;border-radius:3px;border:1px solid #c4c4c4"></div>
<svg class="ov" width="1163" height="1046">
  <!-- right tabs -->
  <path d="M558 384 H576 Q579 384 579 387 V486 H558 Z" fill="#d9d9d9" stroke="#c2c2c2" stroke-width="1"></path>
  <path d="M558 589 H579 V690 H558 Z" fill="#d9d9d9" stroke="#c2c2c2" stroke-width="1"></path>
  <path d="M558 690 H579 V789 Q579 792.5 576 792.5 H558 Z" fill="#d9d9d9" stroke="#c2c2c2" stroke-width="1"></path>
  <path d="M557 486 H579 V589 H557 Z" fill="#f4f4f4"></path>
  <path d="M579 486 V589" stroke="#c2c2c2" stroke-width="1"></path>
</svg>
<div class="a" style="left:412px;top:384px;width:147px;height:428px;background:#f4f4f4;border:1px solid #c8c8c8;border-right:none;border-radius:5px 0 0 4px"></div>
<div class="a" style="left:557px;top:486px;width:3px;height:103px;background:#f4f4f4"></div>
<svg class="ov" width="1163" height="1046">
  <path d="M398 388 L406 396 M406 388 L398 396" stroke="#666" stroke-width="2.4"></path>
  <path d="M398.5 406 V417 M402 411 L406 408 V414 Z" stroke="#777" stroke-width="1.5" fill="#777"></path>
  <g stroke="#666" stroke-width="2.2"><path d="M396.8 430 H407.2 M402 424.8 V435.2 M398.3 426.3 L405.7 433.7 M405.7 426.3 L398.3 433.7"></path></g>
  <circle cx="402" cy="430" r="3" fill="#666"></circle><circle cx="402" cy="430" r="1.6" fill="#d9d9d9"></circle>
  <!-- bottom icon -->
  <path d="M396.5 797.5 H408.5 V805 L406 812.5 H396.5 Z" fill="#f4f4f4" stroke="#333" stroke-width="1"></path>
  <g fill="#333"><rect x="398.5" y="800" width="2" height="2"></rect><rect x="402" y="800" width="2" height="2"></rect><rect x="398.5" y="804" width="2" height="2"></rect><rect x="402" y="804" width="2" height="2"></rect><rect x="398.5" y="808" width="2" height="2"></rect><rect x="402" y="808" width="2" height="2"></rect></g>
  <!-- item highlight -->
  <rect x="430" y="643" width="122" height="37.5" rx="2" fill="#e2e2e2"></rect>
  <!-- move -->
  <use href="#mvicon" transform="translate(-470.2,341.7)"></use>
  <!-- scale -->
  <path d="M449.5 440.8 H432.8 V452 M459.6 448.5 V467.2 H448" fill="none" stroke="#1e88e5" stroke-width="1.3"></path>
  <rect x="432.8" y="452.8" width="14.4" height="14.4" fill="none" stroke="#555" stroke-width="1.3"></rect>
  <use href="#bolt" transform="translate(447.5,436.8)"></use>
  <!-- stretch -->
  <rect x="432.5" y="482.5" width="14" height="27" fill="none" stroke="#555" stroke-width="1.2"></rect>
  <path d="M448 482.6 H451 M448 509.4 H463.6 L457.5 492.5" fill="none" stroke="#1e88e5" stroke-width="1.2"></path>
  <path d="M441 502.6 H450" stroke="#333" stroke-width="1.4"></path><path d="M455.4 502.6 L449.5 499.2 V506 Z" fill="#333"></path>
  <use href="#bolt" transform="translate(447.5,478.8)"></use>
  <!-- polar stretch -->
  <path d="M437.8 547.3 H432.5 V522.5 H443.8 V539.6" fill="none" stroke="#1e88e5" stroke-width="1.2"></path>
  <path d="M439.5 541.5 H461 V551.5 H439.5" fill="none" stroke="#444" stroke-width="1" stroke-dasharray="1.6 1.2"></path>
  <path d="M439.5 541 V551.8" stroke="#444" stroke-width="1"></path>
  <path d="M448.5 532.3 H456.5 V540" fill="none" stroke="#333" stroke-width="1.3"></path><path d="M444.8 532.3 L449.5 529.3 V535.3 Z" fill="#333"></path>
  <use href="#bolt" transform="translate(447.5,520.8)"></use>
  <!-- rotate -->
  <path d="M459.2 577 A13.5 13.5 0 1 1 447.5 565.5" fill="none" stroke="#333" stroke-width="1.3"></path>
  <path d="M446.5 561.8 L452.8 565.5 L446.5 569.2 Z" fill="#333"></path>
  <use href="#bolt" transform="translate(447.5,562.8)"></use>
  <!-- mirror -->
  <path d="M446 607 L432.5 635.5 H446 Z" fill="none" stroke="#555" stroke-width="1.1"></path>
  <path d="M448.2 607 V635.5 H462.5 Z" fill="none" stroke="#1e88e5" stroke-width="1.1"></path>
  <use href="#bolt" transform="translate(447.5,604.8)"></use>
  <!-- array -->
  <rect x="432.5" y="650.5" width="11" height="11" fill="#fff" stroke="#555" stroke-width="1"></rect>
  <rect x="448" y="650" width="12" height="12" fill="#5aa7e4"></rect><rect x="432" y="666" width="12" height="12" fill="#5aa7e4"></rect><rect x="448" y="666" width="12" height="12" fill="#5aa7e4"></rect>
  <use href="#bolt" transform="translate(447.5,646.8)"></use>
  <!-- lookup -->
  <rect x="432.5" y="692.5" width="25" height="27.5" fill="#f8f8f8" stroke="#555" stroke-width="1.1"></rect>
  <rect x="432.5" y="692.5" width="25" height="2.6" fill="#555"></rect><rect x="433.5" y="693.2" width="3" height="1.3" fill="#fff"></rect>
  <path d="M435 698.7 H438.2 M440.2 698.7 H447 M435 702.7 H438.2 M440.2 702.7 H454 M435 706.6 H438.2 M440.2 706.6 H454 M435 710.6 H438.2 M440.2 710.6 H450 M435 714.5 H438.2 M440.2 714.5 H454" stroke="#444" stroke-width="0.9"></path>
  <use href="#bolt" transform="translate(447.5,688.8)"></use>
  <!-- property table -->
  <defs><linearGradient id="tg" x1="0" y1="0" x2="0" y2="1"><stop offset="0" stop-color="#cdd0d6"></stop><stop offset="1" stop-color="#f4f5f7"></stop></linearGradient></defs>
  <rect x="433.5" y="731.5" width="28" height="28" fill="#fff" stroke="#555" stroke-width="1.2"></rect>
  <rect x="434" y="735" width="27" height="10" fill="url(#tg)"></rect>
  <rect x="433.5" y="731.5" width="28" height="3.5" fill="#666"></rect>
  <path d="M433.5 740 H461.5 M433.5 745 H461.5 M433.5 750 H461.5 M433.5 755 H461.5 M440.5 735 V759 M447.5 735 V759 M454.5 735 V759" stroke="#c4c4c4" stroke-width="0.9"></path>
</svg>
<div class="t" style="left: 468px; top: 404px; letter-spacing: 0px;">移動</div>
<div class="t" style="left: 468px; top: 446px; letter-spacing: 0px;">尺度変更</div>
<div class="t" style="left: 468px; top: 488px; transform: scaleX(0.956); letter-spacing: -1px;"><span style="display: inline-block; transform-origin: 0px 50%; transform: scaleX(0.8); margin-right: -12px;">ストレッチ</span></div>
<div class="t" style="left: 468px; top: 530px; letter-spacing: -0.57px;">円形状<span style="display: inline-block; transform-origin: 0px 50%; transform: scaleX(0.8); margin-right: -12px;">ストレッチ</span></div>
<div class="t" style="left: 468px; top: 572px; letter-spacing: 0px;">回転</div>
<div class="t" style="left: 468px; top: 614px; letter-spacing: 0px;">反転</div>
<div class="t" style="left: 468px; top: 656px; letter-spacing: 0px;">配列複写</div>
<div class="t" style="left: 468px; top: 698px; transform: scaleX(0.98); letter-spacing: -0.92px;"><span style="display: inline-block; transform-origin: 0px 50%; transform: scaleX(0.8); margin-right: -14.4px;">ルックアップ</span></div>
<div class="t" style="left: 468px; top: 732.5px; letter-spacing: -0.65px;"><span style="display: inline-block; transform-origin: 0px 50%; transform: scaleX(0.8); margin-right: -9.6px;">ブロック</span> <span style="display: inline-block; transform-origin: 0px 50%; transform: scaleX(0.8); margin-right: -7.2px;">プロパ</span></div>
<div class="t" style="left: 468px; top: 747px; letter-spacing: -0.52px;"><span style="display: inline-block; transform-origin: 0px 50%; transform: scaleX(0.8); margin-right: -14.4px;">ティテーブル</span></div>
<!-- rotated tab labels -->
<div class="t" style="left: 568.5px; top: 436px; color: rgb(110, 110, 110); transform: translate(-50%, -50%) rotate(-90deg) scaleX(0.956); letter-spacing: -1px; transform-origin: 50% 50%;"><span style="display: inline-block; transform-origin: 0px 50%; transform: scaleX(0.8); margin-right: -12px;">パラメータ</span></div>
<div class="t" style="left: 568.5px; top: 537.5px; color: rgb(51, 51, 51); transform: translate(-50%, -50%) rotate(-90deg) scaleX(0.956); letter-spacing: -1px; transform-origin: 50% 50%;"><span style="display: inline-block; transform-origin: 0px 50%; transform: scaleX(0.8); margin-right: -12px;">アクション</span></div>
<div class="t" style="left: 568.5px; top: 638.5px; color: rgb(110, 110, 110); transform: translate(-50%, -50%) rotate(-90deg); letter-spacing: -0.89px; transform-origin: 50% 50%;"><span style="display: inline-block; transform-origin: 0px 50%; transform: scaleX(0.8); margin-right: -12px;">パラメータ</span> <span style="display: inline-block; transform-origin: 0px 50%; transform: scaleX(0.8); margin-right: -7.2px;">セット</span></div>
<div class="t" style="left: 568.5px; top: 740.5px; color: rgb(110, 110, 110); transform: translate(-50%, -50%) rotate(-90deg); letter-spacing: -1px; transform-origin: 50% 50%;">拘束</div>
<div class="t" style="left: 401px; top: 682px; color: rgb(110, 110, 110); transform: translate(-50%, -50%) rotate(-90deg); letter-spacing: -0.48px; transform-origin: 50% 50%;"><span style="display: inline-block; transform-origin: 0px 50%; transform: scaleX(0.8); margin-right: -9.6px;">ブロック</span> <span style="display: inline-block; transform-origin: 0px 50%; transform: scaleX(0.8); margin-right: -14.4px;">オーサリング</span> <span style="display: inline-block; transform-origin: 0px 50%; transform: scaleX(0.8); margin-right: -9.6px;">パレット</span> - <span style="display: inline-block; transform-origin: 0px 50%; transform: scaleX(0.8); margin-right: -19.2px;">すべてのパレット</span></div>


<!-- ============ BOTTOM ============ -->
<div class="a" style="left:0;top:1011px;width:1163px;height:29px;background:#d9d9d9"></div>
<div class="a" style="left:0;top:1040px;width:1163px;height:6px;background:#33342a"></div>
<div class="a" style="left:295px;top:1040px;width:48px;height:6px;background:#b0692b"></div>
<div class="a" style="left:393px;top:1040px;width:48px;height:6px;background:#5e5f58"></div>
<svg class="ov" width="1163" height="1046">
  <path d="M136 1028 C140 1028 141 1025 142 1020 C143 1014 144 1011.5 150 1011.5 H160 C164 1011.5 165 1014 165 1018 C165 1023 164 1027 160 1028 Z" fill="#e6e6e6"></path>
  <path d="M60 1028 C64 1028 65 1025 66 1019 C67 1013 68 1011.5 74 1011.5 H131 C136 1011.5 137 1014 137 1019 C137 1025 136 1028 131 1028 Z" fill="#e6e6e6"></path>
  <path d="M12 1011.5 H62 C66 1011.5 67 1014 66 1019 C65 1025 63 1028 58 1028 H22 C17 1028 16 1025 15 1019 C14 1014 13 1011.5 12 1011.5 Z" fill="#f4f4f4"></path>
  <path d="M147 1020 H155 M151 1016 V1024" stroke="#777" stroke-width="2"></path>
</svg>
<div class="t" style="left: 23px; top: 1013px; color: rgb(34, 34, 34); letter-spacing: 0.1px;"><span style="display: inline-block; transform-origin: 0px 50%; transform: scaleX(0.8); margin-right: -7.2px;">モデル</span></div>
<div class="t" style="left: 75px; top: 1013px; color: rgb(136, 136, 136); letter-spacing: -0.94px;"><span style="display: inline-block; transform-origin: 0px 50%; transform: scaleX(0.8); margin-right: -12px;">レイアウト</span>1</div>


</body></html>
